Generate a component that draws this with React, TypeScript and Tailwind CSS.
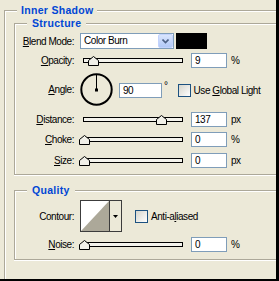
import { ReactNode } from "react";

const Key = ({ children }: { children: ReactNode }) => (
  <span className="underline underline-offset-[1px] decoration-1">{children}</span>
);

const Group = ({ title, className, children }: { title: string; className?: string; children: ReactNode }) => (
  <div className={"relative border-l border-t border-b border-[#aca899] shadow-[inset_1px_1px_0_#fff,0_1px_0_#fff] " + (className ?? "")}>
    <span className="absolute -top-[7px] left-[12px] px-[5px] bg-[#ece9d8] text-[#0046d5] font-bold text-[10.5px] leading-[12px] tracking-[0.3px]">
      {title}
    </span>
    {children}
  </div>
);

const Label = ({ children }: { children: ReactNode }) => (
  <div className="w-[59px] text-right shrink-0 mr-[6px]">{children}</div>
);

const Thumb = ({ left }: { left: number }) => (
  <svg className="absolute top-[3px]" style={{ left }} width="11" height="10" viewBox="0 0 11 10">
    <polygon points="5.5,0.5 10.5,4.5 10.5,9.5 0.5,9.5 0.5,4.5" fill="#f1f0e8" stroke="#000" />
  </svg>
);

const Slider = ({ pos }: { pos: number }) => (
  <div className="relative w-[106px] h-[15px] flex items-center shrink-0">
    <div className="ml-[3px] w-[100px] h-[5px] border border-black bg-[#f4f3ec]" />
    <Thumb left={pos} />
  </div>
);

const NumField = ({ value, w = "w-[36px]" }: { value: string; w?: string }) => (
  <div className={"h-[15px] border border-[#7f9db9] bg-white pl-[3px] leading-[13px] shrink-0 " + w}>{value}</div>
);

const Check = () => (
  <div className="w-[13px] h-[13px] border border-[#1c5180] bg-linear-to-br from-[#d6d5cc] to-white shrink-0" />
);

const SliderRow = ({ label, pos, value, unit, className }: { label: ReactNode; pos: number; value: string; unit: string; className?: string }) => (
  <div className={"flex items-center h-[15px] " + (className ?? "")}>
    <Label>{label}</Label>
    <Slider pos={pos} />
    <div className="ml-[5px]">
      <NumField value={value} />
    </div>
    <span className="ml-[4px]">{unit}</span>
  </div>
);

export default function App() {
  return (
    <div className="w-[279px] h-[281px] overflow-hidden bg-[#ece9d8] border-r-[3px] border-b-[2px] border-black pl-[4px] pt-[10px] text-[10px] tracking-[-0.45px] text-black font-['Liberation_Sans',Arial,sans-serif]">
      <div className="relative h-[300px] w-[300px] border-l border-t border-[#aca899] shadow-[inset_1px_1px_0_#fff] pl-[9px] pt-[12px]">
        <span className="absolute -top-[7px] left-[12px] px-[4px] bg-[#ece9d8] text-[#0046d5] font-bold text-[10.5px] leading-[12px] tracking-[0.3px]">
          Inner Shadow
        </span>

        <Group title="Structure" className="h-[152px] w-[290px] pt-[9px]">
          <div className="flex items-center h-[16px]">
            <Label>
              <Key>B</Key>lend Mode:
            </Label>
            <div className="relative w-[94px] h-[16px] border border-[#7f9db9] bg-white pl-[3px] leading-[14px] shrink-0">
              Color Burn
              <div className="absolute right-0 top-0 w-[15px] h-[14px] rounded-[2px] border border-[#c3d3fd] bg-linear-to-b from-[#d9e5fd] to-[#b2c9f7] flex items-center justify-center">
                <svg width="7" height="5" viewBox="0 0 7 5">
                  <polyline points="0.5,0.5 3.5,3.5 6.5,0.5" fill="none" stroke="#4d6185" strokeWidth="1.6" />
                </svg>
              </div>
            </div>
            <div className="ml-[2px] w-[31px] h-[16px] bg-black" />
          </div>

          <SliderRow className="mt-[4px]" label={<><Key>O</Key>pacity:</>} pos={8} value="9" unit="%" />

          <div className="flex items-center h-[33px] mt-[5px]">
            <Label>
              <Key>A</Key>ngle:
            </Label>
            <svg width="33" height="33" viewBox="0 0 33 33" className="shrink-0">
              <circle cx="16.5" cy="16.5" r="15.2" fill="none" stroke="#000" strokeWidth="2" />
              <line x1="16.5" y1="2" x2="16.5" y2="16" stroke="#000" strokeWidth="1" />
              <rect x="15" y="15.5" width="3" height="3" fill="#000" />
            </svg>
            <div className="ml-[6px] mt-[2px]">
              <NumField value="90" w="w-[43px]" />
            </div>
            <span className="ml-[2px] self-start mt-[9px] leading-[8px]">°</span>
            <div className="ml-[10px] mt-[2px] flex items-center">
              <Check />
              <span className="ml-[3px]">
                Use <Key>G</Key>lobal Light
              </span>
            </div>
          </div>

          <SliderRow className="mt-[6px]" label={<><Key>D</Key>istance:</>} pos={76} value="137" unit="px" />
          <SliderRow className="mt-[5px]" label={<><Key>C</Key>hoke:</>} pos={-1} value="0" unit="%" />
          <SliderRow className="mt-[6px]" label={<><Key>S</Key>ize:</>} pos={-1} value="0" unit="px" />
        </Group>

        <Group title="Quality" className="h-[70px] w-[290px] mt-[15px] pt-[9px]">
          <div className="flex items-center h-[32px]">
            <Label>Contour:</Label>
            <div className="flex w-[42px] h-[32px] border border-[#3c3c3c] shrink-0">
              <svg width="28" height="30" viewBox="0 0 28 30" className="shrink-0">
                <rect width="28" height="30" fill="#fff" />
                <polygon points="0,30 28,0 28,30" fill="#aca899" />
              </svg>
              <div className="flex-1 border-l border-[#3c3c3c] flex items-center justify-center">
                <svg width="5" height="3" viewBox="0 0 5 3">
                  <polygon points="0,0 5,0 2.5,3" fill="#000" />
                </svg>
              </div>
            </div>
            <div className="ml-[13px] flex items-center">
              <Check />
              <span className="ml-[3px]">
                Anti-a<Key>l</Key>iased
              </span>
            </div>
          </div>
          <SliderRow className="mt-[5px]" label={<><Key>N</Key>oise:</>} pos={-1} value="0" unit="%" />
        </Group>
      </div>
    </div>
  );
}
